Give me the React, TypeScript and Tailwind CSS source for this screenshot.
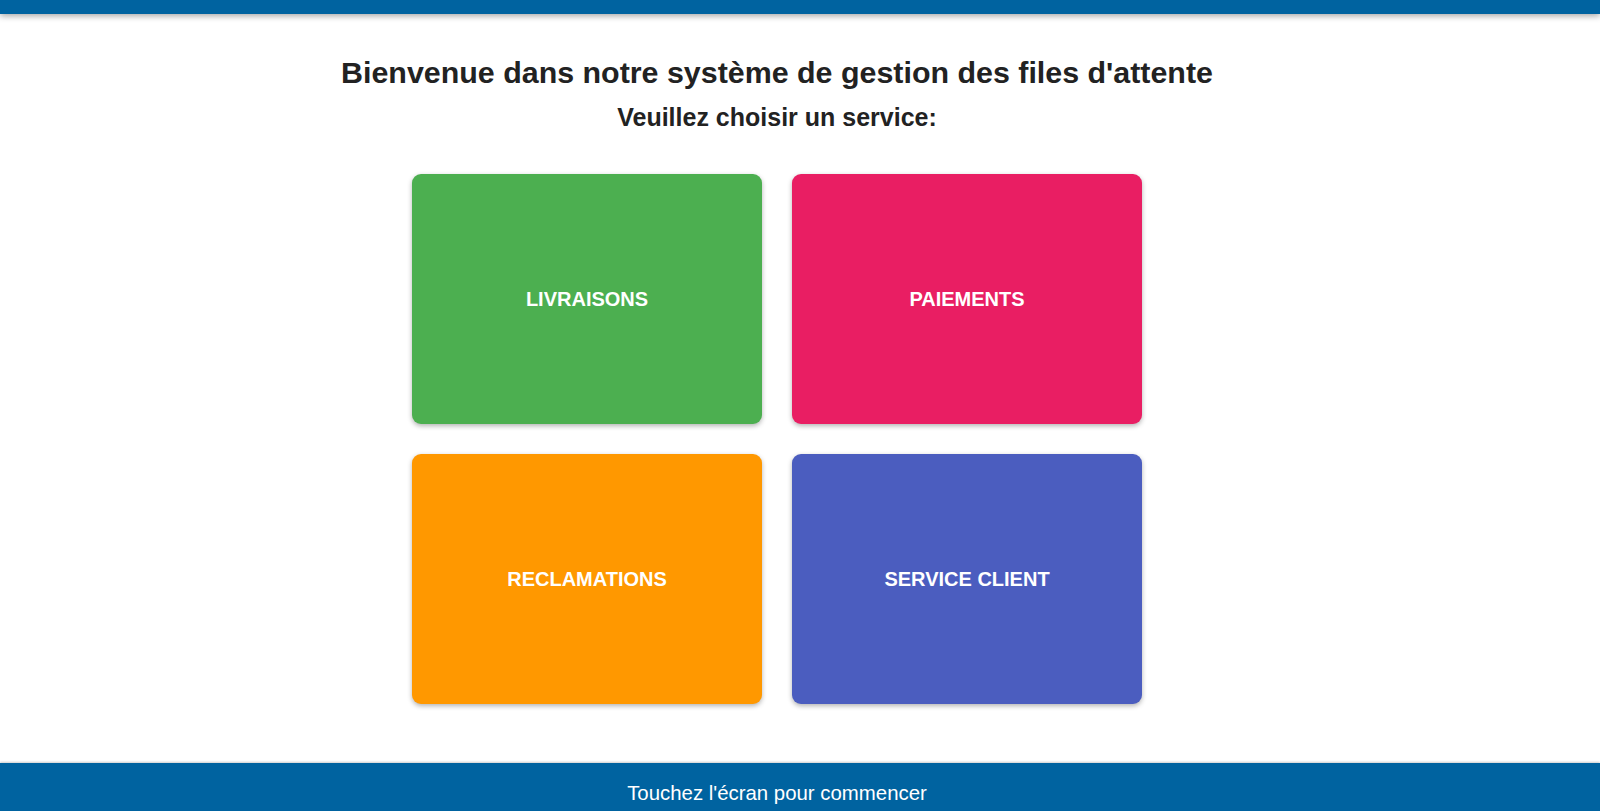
import React from "react";

const services = [
  { label: "LIVRAISONS", bg: "bg-[#4caf50]" },
  { label: "PAIEMENTS", bg: "bg-[#e91e63]" },
  { label: "RECLAMATIONS", bg: "bg-[#ff9800]" },
  { label: "SERVICE CLIENT", bg: "bg-[#4b5dbf]" },
];

export default function App() {
  return (
    <div
      className="w-full h-[811px] bg-white flex flex-col overflow-hidden"
      style={{ fontFamily: '"Liberation Sans", Arial, sans-serif' }}
    >
      <div className="h-[14px] w-full bg-[#0063a0] shadow-[0_2px_6px_rgba(0,0,0,0.35)] shrink-0 relative z-10" />
      <main className="flex-1 flex flex-col items-center pr-[46px] pt-[40px]">
        <h1 className="text-[30.4px] leading-[36px] font-bold text-[#222]">
          Bienvenue dans notre système de gestion des files d'attente
        </h1>
        <h2 className="mt-[12px] text-[25px] leading-[30px] font-bold text-[#222]">
          Veuillez choisir un service:
        </h2>
        <div className="mt-[42px] grid grid-cols-[350px_350px] gap-[30px]">
          {services.map((s) => (
            <button
              key={s.label}
              className={`${s.bg} h-[250px] rounded-[9px] shadow-[0_2px_5px_rgba(0,0,0,0.3)] flex items-center justify-center text-white font-bold text-[20px]`}
            >
              {s.label}
            </button>
          ))}
        </div>
      </main>
      <footer className="h-[48px] shrink-0 bg-[#0063a0] flex items-center justify-center pr-[46px] pt-[12px] shadow-[0_-1px_2px_rgba(0,0,0,0.2)]">
        <span className="text-white text-[20.4px] leading-[24px]">Touchez l'écran pour commencer</span>
      </footer>
    </div>
  );
}
